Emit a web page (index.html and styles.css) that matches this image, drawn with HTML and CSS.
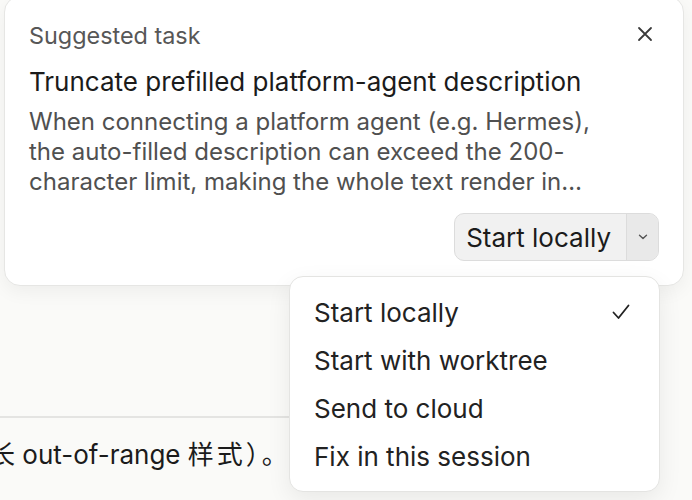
FILE: index.html
```html
<!DOCTYPE html>
<html lang="en">
<head>
    <meta charset="UTF-8">
    <meta name="viewport" content="width=device-width, initial-scale=1.0">
    <title>Suggested task</title>
    <link rel="stylesheet" href="styles.css">
</head>
<body>
    <div class="page">
        <div class="task-card">
            <div class="task-header">
                <span class="task-label">Suggested task</span>
                <button class="close-btn" aria-label="Close">
                    <svg width="16" height="16" viewBox="0 0 16 16">
                        <path d="M2 2 L14 14 M14 2 L2 14" stroke="#3a3a3a" stroke-width="1.8" stroke-linecap="round" fill="none"/>
                    </svg>
                </button>
            </div>
            <h2 class="task-title">Truncate prefilled platform-agent description</h2>
            <p class="task-desc">When connecting a platform agent (e.g. Hermes), the auto-filled description can exceed the 200-character limit, making the whole text render in…</p>
            <div class="task-actions">
                <div class="split-btn">
                    <button class="split-main">Start locally</button>
                    <button class="split-toggle" aria-label="More options">
                        <svg width="10" height="6" viewBox="0 0 10 6">
                            <path d="M1.5 1.2 L5 4.6 L8.5 1.2" stroke="#555" stroke-width="1.4" stroke-linecap="round" stroke-linejoin="round" fill="none"/>
                        </svg>
                    </button>
                </div>
            </div>
        </div>

        <div class="behind">
            <div class="behind-rule"></div>
            <p class="behind-text">长 out-of-range <span class="cjk">样式）。</span></p>
        </div>
    </div>

    <!-- Menu opened from the split button -->
    <ul class="start-menu">
        <li class="menu-item">
            <span>Start locally</span>
            <svg width="20" height="18" viewBox="0 0 20 18">
                <path d="M2.5 9.5 L7.5 15 L17.5 2.5" stroke="#222" stroke-width="1.8" stroke-linecap="round" stroke-linejoin="round" fill="none"/>
            </svg>
        </li>
        <li class="menu-item"><span>Start with worktree</span></li>
        <li class="menu-item"><span>Send to cloud</span></li>
        <li class="menu-item"><span>Fix in this session</span></li>
    </ul>
</body>
</html>
```

FILE: styles.css
```css
body {
    margin: 0;
    background-color: #fafaf8;
    font-family: Inter, "Noto Sans CJK SC", sans-serif;
    overflow: hidden;
    height: 500px;
    position: relative;
}

.page {
    display: flex;
    flex-direction: column;
}

.task-card {
    margin: -4px 8px 0 4px;
    background-color: white;
    border: 1px solid #e6e6e4;
    border-radius: 16px;
    box-shadow: 0 6px 18px rgba(0, 0, 0, 0.05);
    padding: 24px 24px 24px 24px;
    position: relative;
    z-index: 1;
}

.task-header {
    display: flex;
    justify-content: space-between;
    align-items: center;
}

.task-label {
    font-size: 23.4px;
    line-height: 30px;
    color: #575757;
}

.close-btn {
    background: none;
    border: none;
    padding: 0;
    margin-right: 6px;
    margin-top: -4px;
    width: 16px;
    height: 16px;
    cursor: pointer;
}

.task-title {
    margin: 16px 0 0 0;
    font-size: 26px;
    font-weight: 400;
    line-height: 30px;
    color: #1b1b1b;
}

.task-desc {
    margin: 10px 0 0 0;
    width: 570px;
    font-size: 24px;
    line-height: 30px;
    color: #505050;
}

.task-actions {
    display: flex;
    justify-content: flex-end;
    margin-top: 16px;
}

.split-btn {
    display: flex;
    height: 46px;
    border: 1px solid #dcdcdc;
    border-radius: 10px;
    overflow: hidden;
    background-color: #f1f1f1;
}

.split-btn button {
    border: none;
    background: none;
    font-family: inherit;
    cursor: pointer;
}

.split-main {
    padding: 0 15px 0 11px;
    font-size: 26px;
    color: #1b1b1b;
}

.split-toggle {
    width: 32px;
    border-left: 1px solid #dcdcdc !important;
    background-color: #e9e9e9 !important;
    display: flex;
    align-items: center;
    justify-content: center;
    padding: 0;
}

.behind {
    margin-top: 130px;
}

.behind-rule {
    height: 2px;
    background-color: #e4e4e2;
    width: 300px;
}

.behind-text {
    margin: 22px 0 0 -11px;
    font-size: 26px;
    line-height: 30px;
    color: #1b1b1b;
    white-space: nowrap;
}

.cjk {
    letter-spacing: 3px;
}

.start-menu {
    position: absolute;
    left: 289px;
    top: 276px;
    width: 369px;
    margin: 0;
    padding: 11px 0;
    list-style: none;
    background-color: white;
    border: 1px solid #e4e4e2;
    border-radius: 14px;
    box-shadow: 0 8px 24px rgba(0, 0, 0, 0.07);
    z-index: 2;
}

.menu-item {
    display: flex;
    justify-content: space-between;
    align-items: center;
    height: 48px;
    padding: 0 28px 0 24px;
    font-size: 26px;
    color: #222;
}
```
